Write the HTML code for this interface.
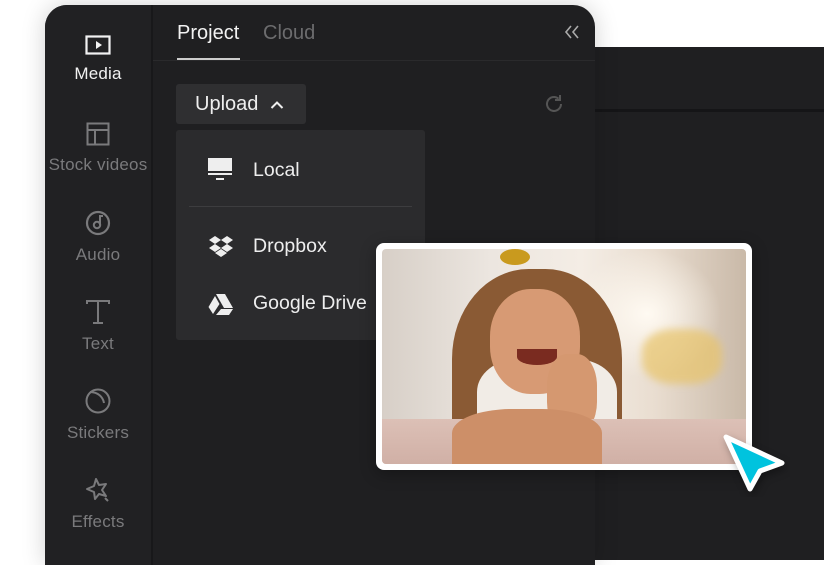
<!DOCTYPE html>
<html><head><meta charset="utf-8"><style>
*{margin:0;padding:0;box-sizing:border-box}
body{width:840px;height:560px;background:#fff;position:relative;overflow:hidden;font-family:"Liberation Sans",sans-serif}
.back{position:absolute;left:560px;top:47px;width:264px;height:513px;background:#1f1f21}
.back .ln{position:absolute;left:0;right:0;top:62px;height:3px;background:#151517}
.main{position:absolute;left:45px;top:5px;width:550px;height:560px;background:#1f1f21;border-radius:22px 22px 0 0;box-shadow:0 0 24px rgba(0,0,0,.18);overflow:hidden}
.side{position:absolute;left:0;top:0;width:108px;height:100%;background:#212123;border-right:2px solid #18181a}
.it{position:absolute;left:0;width:106px;text-align:center;color:#7a7a7c;font-size:17px;letter-spacing:.2px}
.it svg{display:block;margin:0 auto 9px}
.tab{position:absolute;top:17px;font-size:20px}
.sep{position:absolute;left:108px;right:0;top:55px;height:1px;background:#2a2a2c}
.ul{position:absolute;left:132px;top:53px;width:63px;height:2px;background:#ccc}
.btn{position:absolute;left:131px;top:79px;width:130px;height:40px;background:#2f2f31;border-radius:3px;color:#eee;font-size:20px;padding:9px 0 0 19px}
.dd{position:absolute;left:131px;top:125px;width:249px;height:210px;background:#2b2b2d;border-radius:3px}
.row{position:absolute;left:77px;color:#eee;font-size:19.5px}
.ic{position:absolute;left:32px}
.photo{position:absolute;left:376px;top:243px;width:376px;height:227px;background:#fff;border-radius:8px;padding:6px;box-shadow:0 4px 16px rgba(0,0,0,.3)}
.img{width:100%;height:100%;border-radius:4px;overflow:hidden;position:relative;background:linear-gradient(90deg,#d7cfc7 0%,#ece6e0 30%,#f4ede5 55%,#e9ddd0 75%,#c9b9a8 100%)}
</style></head><body>
<div class="back"><div class="ln"></div></div>
<div class="main">
 <div class="side">
  <div class="it" style="top:30px;color:#f2f2f2"><svg width="26" height="20" viewBox="0 0 26 20"><rect x="1.5" y="1.5" width="23" height="17" fill="none" stroke="#f2f2f2" stroke-width="2.2"/><path d="M11 6v8l6-4z" fill="#f2f2f2"/></svg>Media</div>
  <div class="it" style="top:117px"><svg width="24" height="24" viewBox="0 0 24 24"><rect x="1.5" y="1.5" width="21" height="21" fill="none" stroke="#7a7a7c" stroke-width="2"/><path d="M1.5 8h21M9 8v14" stroke="#7a7a7c" stroke-width="2"/></svg>Stock videos</div>
  <div class="it" style="top:205px"><svg width="26" height="26" viewBox="0 0 26 26"><circle cx="13" cy="13" r="11" fill="none" stroke="#7a7a7c" stroke-width="2.2"/><circle cx="12" cy="15" r="3.2" fill="none" stroke="#7a7a7c" stroke-width="2"/><path d="M15 15V6h3" fill="none" stroke="#7a7a7c" stroke-width="2"/></svg>Audio</div>
  <div class="it" style="top:294px"><svg width="26" height="26" viewBox="0 0 26 26"><path d="M2 5V2h22v3M13 2v22M8 24h10" fill="none" stroke="#7a7a7c" stroke-width="2"/></svg>Text</div>
  <div class="it" style="top:383px"><svg width="26" height="26" viewBox="0 0 26 26"><circle cx="13" cy="13" r="11.5" fill="none" stroke="#7a7a7c" stroke-width="2"/><path d="M5 4c8 0 13 5 14 11" fill="none" stroke="#7a7a7c" stroke-width="2"/></svg>Stickers</div>
  <div class="it" style="top:472px"><svg width="26" height="26" viewBox="0 0 26 26"><path d="M11 2l3 6 7-1-4 6 4 6-7-2-4 5-1-7-7-3 7-3z" fill="none" stroke="#7a7a7c" stroke-width="2" stroke-linejoin="round"/><path d="M20 21l3 3" stroke="#7a7a7c" stroke-width="2"/></svg>Effects</div>
 </div>
 <div class="tab" style="left:132px;color:#f2f2f2">Project</div>
 <div class="tab" style="left:218px;color:#6c6c6e">Cloud</div>
 <svg style="position:absolute;left:519px;top:20px" width="16" height="14" viewBox="0 0 16 14"><path d="M7 1L2 7l5 6M14 1L9 7l5 6" fill="none" stroke="#aaa" stroke-width="1.6"/></svg>
 <div class="sep"></div><div class="ul"></div>
 <div class="btn">Upload <svg width="14" height="10" viewBox="0 0 14 10" style="margin-left:6px"><path d="M1.5 8L7 2.5 12.5 8" fill="none" stroke="#eee" stroke-width="2"/></svg></div>
 <svg style="position:absolute;left:498px;top:88px" width="22" height="22" viewBox="0 0 22 22"><path d="M18 11a7 7 0 1 1-2.5-5.4" fill="none" stroke="#555" stroke-width="2"/><path d="M17 2v5h-5" fill="none" stroke="#555" stroke-width="2"/></svg>
 <div class="dd">
  <svg class="ic" style="top:28px" width="24" height="22" viewBox="0 0 24 22"><rect x="0" y="0" width="24" height="13" fill="#eee"/><rect x="0" y="15" width="24" height="2" fill="#eee"/><rect x="8" y="20" width="8" height="2" fill="#eee"/></svg>
  <div class="row" style="top:29px">Local</div>
  <div style="position:absolute;left:13px;right:13px;top:76px;height:1px;background:#3d3d3f"></div>
  <svg class="ic" style="top:106px" width="26" height="22" viewBox="0 0 26 22"><path d="M7 0l6 4-6 4-6-4zM19 0l6 4-6 4-6-4zM7 8l6 4-6 4-6-4zM19 8l6 4-6 4-6-4zM13 13l6 4-6 4-6-4z" fill="#eee"/></svg>
  <div class="row" style="top:105px">Dropbox</div>
  <svg class="ic" style="top:163px" width="26" height="22" viewBox="0 0 26 22"><path d="M8 1h9l8 14h-9zM7 3l4.5 8L5 21 0.5 14zM13 16h12l-4 6H8z" fill="#eee"/></svg>
  <div class="row" style="top:162px">Google Drive</div>
 </div>
</div>
<div class="photo"><div class="img">
 <div style="position:absolute;left:190px;top:0;width:150px;height:130px;background:radial-gradient(ellipse at center,#fffaf2 0%,rgba(255,250,242,0) 70%)"></div>
 <div style="position:absolute;left:260px;top:80px;width:80px;height:55px;background:#e8c46a;border-radius:40%;opacity:.7;filter:blur(4px)"></div>
 <div style="position:absolute;left:70px;top:20px;width:170px;height:200px;background:#8a5a34;border-radius:45% 45% 10% 10%"></div>
 <div style="position:absolute;left:118px;top:0;width:30px;height:16px;background:#c99a1e;border-radius:50%"></div>
 <div style="position:absolute;left:95px;top:110px;width:140px;height:110px;background:#f1ece6;border-radius:30% 30% 0 0"></div>
 <div style="position:absolute;left:108px;top:40px;width:90px;height:105px;background:#d79a74;border-radius:45%"></div>
 <div style="position:absolute;left:135px;top:100px;width:40px;height:16px;background:#7a2b20;border-radius:0 0 50% 50%"></div>
 <div style="position:absolute;left:165px;top:105px;width:50px;height:80px;background:#d59870;border-radius:40%"></div>
 <div style="position:absolute;left:0;top:170px;width:100%;height:50px;background:linear-gradient(180deg,#dcc0b6,#cfaea4)"></div>
 <div style="position:absolute;left:70px;top:160px;width:150px;height:60px;background:#cd8f68;border-radius:40% 40% 0 0"></div>
</div></div>
<svg style="position:absolute;left:714px;top:405px" width="76" height="92" viewBox="0 0 76 92"><path d="M12 32L68 58 46 66 36 84z" fill="#00c3de" stroke="#fff" stroke-width="5" stroke-linejoin="round" style="filter:drop-shadow(2px 4px 4px rgba(0,0,0,.3))"/></svg>
</body></html>
